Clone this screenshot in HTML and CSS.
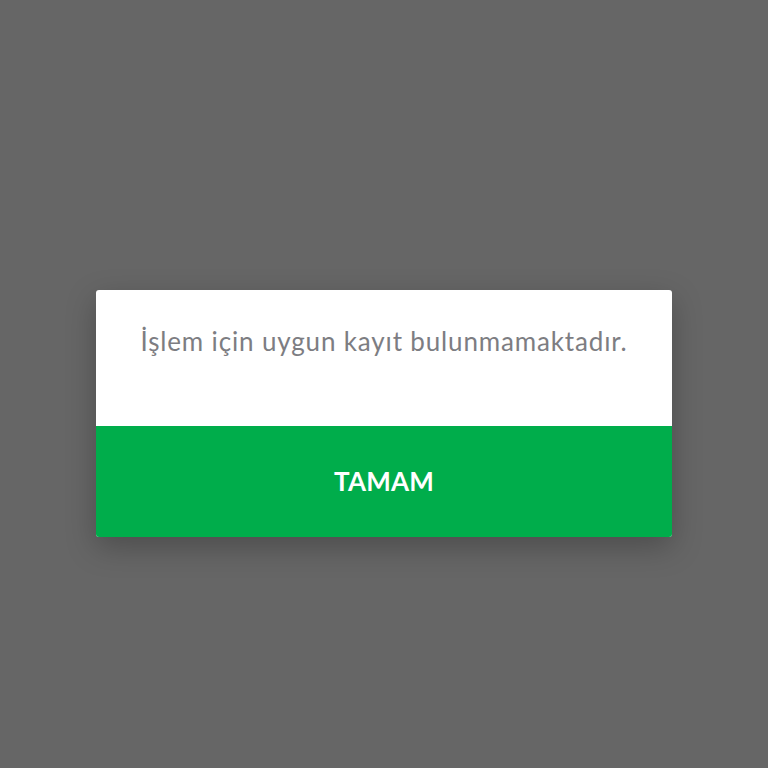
FILE: index.html
```html
<!DOCTYPE html>
<html lang="tr">
<head>
<meta charset="utf-8">
<link rel="stylesheet" href="styles.css">
</head>
<body>
<div class="screen">
  <div class="dialog">
    <div class="message">İşlem için uygun kayıt bulunmamaktadır.</div>
    <button class="ok">TAMAM</button>
  </div>
</div>
</body>
</html>
```
FILE: styles.css
```css
html, body {
  margin: 0;
  padding: 0;
}
body {
  background: #666666;
  font-family: Lato, "Open Sans", sans-serif;
}
.screen {
  width: 768px;
  height: 768px;
  display: flex;
  flex-direction: column;
  align-items: center;
  padding-top: 290px;
  box-sizing: border-box;
}
.dialog {
  width: 576px;
  border-radius: 3px;
  overflow: hidden;
  background: #ffffff;
  box-shadow: 0 10px 30px rgba(0,0,0,0.25);
  display: flex;
  flex-direction: column;
}
.message {
  height: 136px;
  box-sizing: border-box;
  padding-top: 33px;
  text-align: center;
  color: #7d7d82;
  font-size: 26px;
  line-height: 36px;
  letter-spacing: 0.85px;
}
.ok {
  height: 111px;
  border: none;
  margin: 0;
  background: #00ad4b;
  color: #ffffff;
  font-family: Lato, "Open Sans", sans-serif;
  font-weight: 700;
  font-size: 26px;
  letter-spacing: 0.2px;
  padding: 0;
  padding-bottom: 2px;
}
```
